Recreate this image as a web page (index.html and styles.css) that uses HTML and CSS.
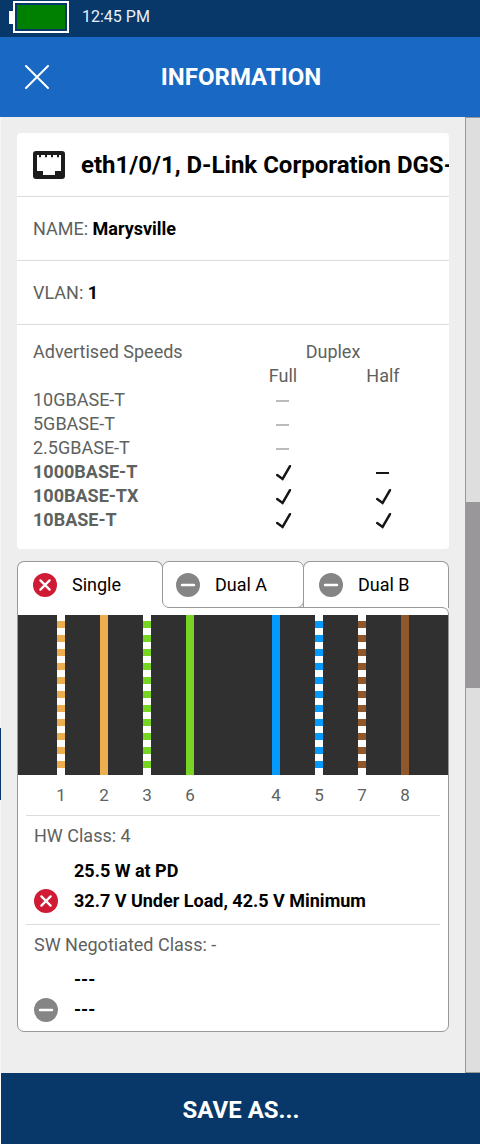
FILE: index.html
```html
<!DOCTYPE html>
<html lang="en">
<head>
  <meta charset="UTF-8" />
  <meta name="viewport" content="width=device-width, initial-scale=1.0" />
  <title>Information</title>
  <link rel="stylesheet" href="styles.css">
</head>
<body>
  <!-- Shared icons -->
  <svg class="icon-defs" width="0" height="0">
    <symbol id="icon-fail" viewBox="0 0 24 24">
      <circle cx="12" cy="12" r="12" fill="#cf1b34" />
      <path d="M7.4 7.4l9.2 9.2M16.6 7.4l-9.2 9.2" stroke="#fff" stroke-width="2.3" stroke-linecap="round" />
    </symbol>
    <symbol id="icon-none" viewBox="0 0 24 24">
      <circle cx="12" cy="12" r="12" fill="#858585" />
      <path d="M6 12h12" stroke="#fff" stroke-width="2.5" stroke-linecap="round" />
    </symbol>
    <symbol id="icon-check" viewBox="0 0 20 20">
      <path d="M4.2 12l5.4 4L17 3.2" fill="none" stroke="#161616" stroke-width="2.5" stroke-linecap="round" />
    </symbol>
  </svg>

  <div class="screen">
    <div class="status-bar">
      <div class="battery-tip"></div>
      <div class="battery"><div class="battery-level"></div></div>
      <div class="clock">12:45 PM</div>
    </div>

    <div class="header">
      <svg class="close-icon" viewBox="0 0 24 24"><path d="M1 1l22 22M23 1L1 23" stroke="#fff" stroke-width="2" stroke-linecap="round" /></svg>
      <h1>INFORMATION</h1>
    </div>

    <div class="main">
      <div class="edge"></div>
      <div class="content">
        <!-- Port card -->
        <div class="card">
          <div class="card-row card-title">
            <svg class="port-icon" viewBox="0 0 32 28">
              <rect width="32" height="28" rx="3" fill="#1c1c1c" />
              <path d="M4 4h2v2.3h2V4h4v2.3h2V4h4v2.3h2V4h4v2.3h2V4h2v16h-6v4H10v-4H4z" fill="#fff" />
            </svg>
            <span>eth1/0/1, D-Link Corporation DGS-</span>
          </div>
          <div class="card-row">NAME:&nbsp;<strong>Marysville</strong></div>
          <div class="card-row">VLAN:&nbsp;<strong>1</strong></div>
          <div class="speeds">
            <div>Advertised Speeds</div><div class="duplex">Duplex</div>
            <div></div><div class="cell">Full</div><div class="cell">Half</div>
            <div>10GBASE-T</div><div class="cell"><i class="dash off"></i></div><div></div>
            <div>5GBASE-T</div><div class="cell"><i class="dash off"></i></div><div></div>
            <div>2.5GBASE-T</div><div class="cell"><i class="dash off"></i></div><div></div>
            <div class="on">1000BASE-T</div><div class="cell"><svg class="check"><use href="#icon-check" /></svg></div><div class="cell"><i class="dash"></i></div>
            <div class="on">100BASE-TX</div><div class="cell"><svg class="check"><use href="#icon-check" /></svg></div><div class="cell"><svg class="check"><use href="#icon-check" /></svg></div>
            <div class="on">10BASE-T</div><div class="cell"><svg class="check"><use href="#icon-check" /></svg></div><div class="cell"><svg class="check"><use href="#icon-check" /></svg></div>
          </div>
        </div>

        <!-- PoE tabs -->
        <div class="tabs">
          <div class="tab active"><svg class="badge"><use href="#icon-fail" /></svg><span>Single</span></div>
          <div class="tab middle"><svg class="badge"><use href="#icon-none" /></svg><span>Dual A</span></div>
          <div class="tab last"><svg class="badge"><use href="#icon-none" /></svg><span>Dual B</span></div>
        </div>
        <div class="panel">
          <div class="wires">
            <div class="slot"><div class="wire orange striped"></div></div>
            <div class="slot"><div class="wire orange"></div></div>
            <div class="slot"><div class="wire green striped"></div></div>
            <div class="slot"><div class="wire green"></div></div>
            <div class="slot"></div>
            <div class="slot"><div class="wire blue"></div></div>
            <div class="slot"><div class="wire blue striped"></div></div>
            <div class="slot"><div class="wire brown striped"></div></div>
            <div class="slot"><div class="wire brown"></div></div>
          </div>
          <div class="pins">
            <div class="slot">1</div>
            <div class="slot">2</div>
            <div class="slot">3</div>
            <div class="slot">6</div>
            <div class="slot"></div>
            <div class="slot">4</div>
            <div class="slot">5</div>
            <div class="slot">7</div>
            <div class="slot">8</div>
          </div>
          <div class="power">
            <div class="power-class">HW Class: 4</div>
            <div class="power-line"><div class="badge"></div><span>25.5 W at PD</span></div>
            <div class="power-line"><svg class="badge"><use href="#icon-fail" /></svg><span>32.7 V Under Load, 42.5 V Minimum</span></div>
          </div>
          <div class="power">
            <div class="power-class">SW Negotiated Class: -</div>
            <div class="power-line"><div class="badge"></div><span>---</span></div>
            <div class="power-line"><svg class="badge"><use href="#icon-none" /></svg><span>---</span></div>
          </div>
        </div>
      </div>

      <div class="scrollbar"><div class="thumb"></div></div>
    </div>

    <div class="footer">SAVE AS...</div>
  </div>
</body>
</html>
```

FILE: styles.css
```css
* { margin: 0; padding: 0; box-sizing: border-box; }
body {
  font-family: Roboto, sans-serif;
  font-size: 18px;
  color: #5e625e;
  background-color: white;
}
svg { display: block; flex: none; }
.icon-defs { position: absolute; }
.screen {
  width: 480px;
  height: 1144px;
  display: flex;
  flex-direction: column;
  overflow: hidden;
}

/* Status bar */
.status-bar {
  height: 37px;
  background-color: #083769;
  display: flex;
  align-items: center;
  padding: 0 0 3px 9px;
}
.battery-tip { width: 4px; height: 13px; background-color: white; }
.battery { width: 56px; height: 32px; border: 2px solid white; padding: 2px; }
.battery-level { width: 48px; height: 24px; background-color: #008000; }
.clock { margin-left: 13px; padding-bottom: 2px; font-size: 16px; color: #e9f2fa; }

/* Header */
.header {
  height: 80px;
  background-color: #1968c3;
  display: flex;
  align-items: center;
  padding: 0 25px;
}
.close-icon { width: 24px; height: 24px; }
.header h1 {
  flex: 1;
  margin-right: 22px;
  text-align: center;
  font-size: 24px;
  font-weight: bold;
  color: white;
}

.main {
  height: 956px;
  display: flex;
  background-color: #eee;
}
.edge {
  width: 1px;
  padding-top: 611px;
  background-color: #f6f6f6;
}
.edge::after { content: ""; display: block; height: 72px; background-color: #083769; }
.content { width: 464px; padding: 16px; }

/* Port card */
.card { width: 432px; height: 416px; background-color: white; border-radius: 4px; overflow: hidden; }
.card-row {
  height: 64px;
  padding: 0 0 0 16px;
  display: flex;
  align-items: center;
  border-bottom: 1px solid #dcdcdc;
  white-space: nowrap;
}
.card-row strong { color: black; }
.card-title { font-size: 24px; font-weight: bold; color: black; }
.port-icon { width: 32px; height: 28px; margin-right: 16px; }
.speeds {
  display: grid;
  grid-template-columns: 200px 100px 100px;
  grid-auto-rows: 24px;
  line-height: 24px;
  padding: 15px 16px;
}
.duplex { grid-column: span 2; text-align: center; }
.cell { display: flex; align-items: center; justify-content: center; }
.on { font-weight: bold; }
.dash { width: 13px; height: 2px; margin: 2px 1px 0 0; background-color: #161616; }
.dash.off { background-color: #bbb; }
.check { width: 20px; height: 20px; margin-top: 2px; }

/* Tabs */
.tabs { display: flex; width: 432px; height: 46px; margin-top: 12px; color: black; }
.tab {
  height: 47px;
  display: flex;
  align-items: center;
  padding: 0 0 0 15px;
  background-color: white;
  border: 1px solid #999;
  border-radius: 7px 7px 0 0;
}
.badge { flex: none; width: 24px; height: 24px; }
.tab span { margin-left: 15px; }
.tab.active { width: 146px; padding-bottom: 1px; border-bottom: none; position: relative; z-index: 1; }
/* opens the active tab into the panel */
.tab.active::after {
  content: "";
  position: absolute;
  left: 0;
  top: 40px;
  width: 152px;
  height: 8px;
  background-color: white;
}
.tab.middle { width: 142px; margin-left: -1px; padding-left: 13px; border-radius: 7px; position: relative; z-index: 2; }
.tab.last { width: 146px; margin-left: -1px; padding-bottom: 1px; border-bottom: none; }

/* Panel */
.panel {
  position: relative;
  width: 432px;
  height: 425px;
  background-color: white;
  border: 1px solid #999;
  border-radius: 0 7px 7px 7px;
}
.wires, .pins { display: flex; padding: 0 21.5px; }
.slot { width: 43px; display: flex; justify-content: center; }
.wires { height: 160px; margin-top: 7px; background-color: #303030; }
.wire { width: 8px; height: 160px; background-color: var(--wire); }
.wire.striped {
  background-image: linear-gradient(var(--wire) 7px, white 7px);
  background-size: 8px 14px;
  background-position: 0 6px;
}
.orange { --wire: #edae4f; }
.green { --wire: #79d524; }
.blue { --wire: #0499fd; }
.brown { --wire: #8f572a; }
.pins { height: 40px; line-height: 40px; font-size: 17px; }
.power {
  height: 109px;
  margin: 0 8px;
  padding: 5px 0 0 8px;
  border-top: 1px solid #dcdcdc;
}
.power-class { height: 34px; line-height: 30px; }
.power-line {
  height: 30px;
  display: flex;
  align-items: center;
  font-weight: bold;
  color: black;
}
.power-line .badge { margin-top: 2px; }
.power-line span { margin-left: 16px; }

/* Scrollbar */
.scrollbar {
  width: 15px;
  height: 956px;
  padding-top: 384px;
  background-color: #dedede;
  border: 1px solid #999;
  border-right: none;
}
.thumb { height: 186px; background-color: #99979a; }

.footer {
  height: 71px;
  margin-left: 1px;
  padding-left: 1px;
  background-color: #083769;
  color: white;
  font-size: 24px;
  font-weight: bold;
  line-height: 74px;
  text-align: center;
}
```
